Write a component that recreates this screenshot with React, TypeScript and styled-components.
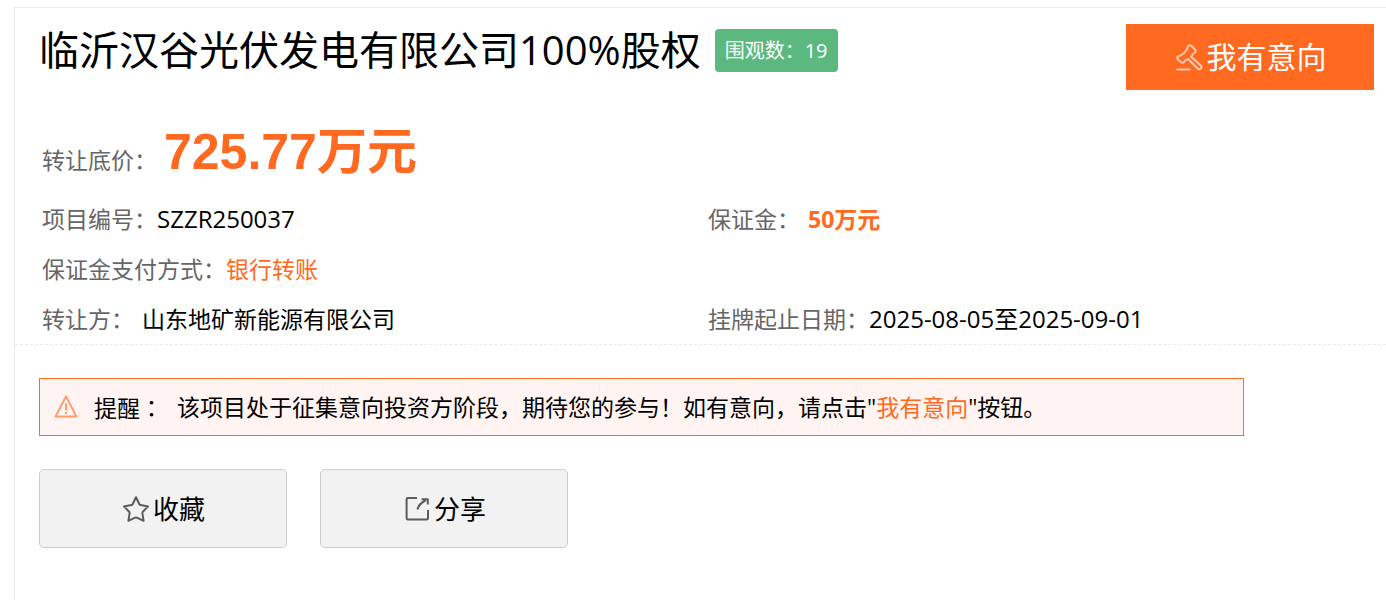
import React from "react";
import styled, { createGlobalStyle } from "styled-components";

const ORANGE = "#ff6a20";

const GlobalStyle = createGlobalStyle`
  * { box-sizing: border-box; }
  body {
    margin: 0;
    background: #fff;
    color: #000;
    font-family: "Open Sans", "Noto Sans CJK SC", sans-serif;
    font-size: 23px;
  }
`;

const Panel = styled.main`
  margin: 7px 0 0 14px;
  min-height: calc(100vh - 7px);
  border: solid #ebebeb;
  border-width: 1px 0 0 1px;
`;

const Header = styled.header`
  display: flex;
  align-items: flex-start;
  justify-content: space-between;
  padding: 16px 12px 0 24px;
`;

const TitleGroup = styled.div`
  display: flex;
  align-items: center;
  gap: 14px;
`;

const Title = styled.h1`
  margin: 0;
  font-size: 40px;
  font-weight: 400;
  line-height: 52px;
`;

const ViewBadge = styled.span`
  padding: 0 10px;
  border-radius: 4px;
  background: #5bb980;
  color: #fff;
  font-size: 20px;
  line-height: 43px;
  white-space: nowrap;
`;

const IntentButton = styled.button`
  display: flex;
  align-items: center;
  justify-content: center;
  gap: 4px;
  flex: none;
  width: 248px;
  height: 66px;
  padding: 0 0 0 2px;
  border: 0;
  background: ${ORANGE};
  color: #fff;
  font-family: inherit;
  font-size: 30px;
  line-height: 40px;
  cursor: pointer;
`;

const Details = styled.dl`
  display: grid;
  grid-template-columns: 1fr 1fr;
  margin: 0;
  padding: 28px 12px 0 27px;
  border-bottom: 1px dashed #ebebeb;
`;

const Field = styled.div<{ $full?: boolean; $gap?: number; $tall?: boolean }>`
  display: flex;
  align-items: baseline;
  gap: ${(p) => p.$gap ?? 0}px;
  grid-column: ${(p) => (p.$full ? "1 / -1" : "auto")};
  height: ${(p) => (p.$tall ? 76 : 50)}px;
  line-height: ${(p) => (p.$tall ? 68 : 50)}px;
`;

const Label = styled.dt`
  color: #666;
`;

const Value = styled.dd<{ $accent?: boolean; $bold?: boolean; $latin?: boolean }>`
  margin: 0;
  color: ${(p) => (p.$accent ? ORANGE : "inherit")};
  font-weight: ${(p) => (p.$bold ? 700 : 400)};
  font-size: ${(p) => (p.$latin ? 24 : 23)}px;
`;

const Price = styled.dd`
  margin: 0;
  color: ${ORANGE};
  font-family: "Liberation Sans", "Noto Sans CJK SC", sans-serif;
  font-size: 50px;
  font-weight: 700;
`;

const Notice = styled.p`
  display: flex;
  align-items: center;
  margin: 33px 142px 0 24px;
  height: 58px;
  padding: 0 14px;
  border: 1px solid ${ORANGE};
  background: #fff4f2;
  line-height: 36px;
`;

const NoticeLabel = styled.span`
  margin: 0 14px 0 16px;
  font-family: "Noto Sans CJK TC", sans-serif;
`;

const IntentLink = styled.a`
  color: ${ORANGE};
  text-decoration: none;
`;

const Actions = styled.div`
  display: flex;
  gap: 33px;
  padding: 33px 24px;
`;

const ActionButton = styled.button`
  display: flex;
  align-items: center;
  justify-content: center;
  gap: 4px;
  width: 248px;
  height: 79px;
  padding: 0 0 0 2px;
  border: 1px solid #ccc;
  border-radius: 5px;
  background: #f2f2f2;
  color: #000;
  font-family: inherit;
  font-size: 26px;
  line-height: 36px;
  cursor: pointer;
`;

const GavelIcon = () => (
  <svg width="27" height="27" viewBox="0 0 27 27" fill="none" stroke="#ffc9ae" strokeWidth="2" strokeLinejoin="round" strokeLinecap="round" aria-hidden="true">
    <path d="M11.6 3.4 C11.8 1.2 13.8 .6 15.2 1.8 L19 5.4 C20.2 6.8 19.6 8.4 18.2 9 C16.6 9.6 16.4 10.4 16 11.6 L15 12.8 L24.8 21.6 C26.6 23.6 24 26.4 21.8 24.8 L12.4 15.2 L10.8 15.4 C9.6 15.6 9 16.4 8.6 17.4 C7.8 19 6 19 4.8 18 L2 15.4 C.6 13.8 1.4 12 3.4 11.8 C5.8 11.4 6.8 10.2 8.4 8.6 C10.2 6.8 11.4 5.6 11.6 3.4 Z" />
    <path d="M1.4 25.6 H13.6" />
  </svg>
);

const WarningIcon = () => (
  <svg width="24" height="24" viewBox="0 0 24 24" fill="none" stroke="#ff9a6a" strokeWidth="2" strokeLinejoin="round" aria-hidden="true">
    <path d="M12 1.4 L22.4 21.4 H1.6 Z" />
    <path d="M12 8.4 V15.4 M12 17 V19" />
  </svg>
);

const StarIcon = () => (
  <svg width="26" height="26" viewBox="0 0 26 26" fill="none" stroke="#5c5c5c" strokeWidth="2" strokeLinejoin="round" aria-hidden="true">
    <path d="M13 1.2 L16.4 8.2 Q16.8 8.9 17.6 9 L25 10.4 L19.8 15.8 Q19.3 16.4 19.4 17.2 L20.6 24.8 L14 21.7 Q13 21.3 12 21.7 L5.4 24.8 L6.6 17.2 Q6.7 16.4 6.2 15.8 L1 10.4 L8.4 9 Q9.2 8.9 9.6 8.2 Z" />
  </svg>
);

const ShareIcon = () => (
  <svg width="26" height="26" viewBox="0 0 26 26" fill="none" stroke="#5c5c5c" strokeWidth="2" strokeLinejoin="round" aria-hidden="true">
    <path d="M13 2 H4 Q2.6 2 2.6 3.4 V22.2 Q2.6 23.6 4 23.6 H22.6 Q24 23.6 24 22.2 V14" />
    <path d="M13.4 13.6 C14.4 9.4 17 6.6 22 4" />
    <path d="M17.6 3.2 H23.8 V8.6" />
  </svg>
);

export default function App() {
  return (
    <>
      <GlobalStyle />
      <Panel lang="zh-CN">
        <Header>
          <TitleGroup>
            <Title>临沂汉谷光伏发电有限公司100%股权</Title>
            <ViewBadge>围观数：19</ViewBadge>
          </TitleGroup>
          <IntentButton type="button">
            <GavelIcon />
            我有意向
          </IntentButton>
        </Header>

        <Details>
          <Field $full $tall $gap={7}>
            <Label>转让底价：</Label>
            <Price>725.77万元</Price>
          </Field>
          <Field>
            <Label>项目编号：</Label>
            <Value $latin>SZZR250037</Value>
          </Field>
          <Field $gap={8}>
            <Label>保证金：</Label>
            <Value $accent $bold>50万元</Value>
          </Field>
          <Field $full>
            <Label>保证金支付方式：</Label>
            <Value $accent>银行转账</Value>
          </Field>
          <Field $gap={8}>
            <Label>转让方：</Label>
            <Value>山东地矿新能源有限公司</Value>
          </Field>
          <Field>
            <Label>挂牌起止日期：</Label>
            <Value $latin>2025-08-05至2025-09-01</Value>
          </Field>
        </Details>

        <Notice>
          <WarningIcon />
          <NoticeLabel lang="zh-TW">提醒：</NoticeLabel>
          <span>
            该项目处于征集意向投资方阶段，期待您的参与！如有意向，请点击"
            <IntentLink href="#intent">我有意向</IntentLink>"按钮。
          </span>
        </Notice>

        <Actions>
          <ActionButton type="button">
            <StarIcon />
            收藏
          </ActionButton>
          <ActionButton type="button">
            <ShareIcon />
            分享
          </ActionButton>
        </Actions>
      </Panel>
    </>
  );
}
